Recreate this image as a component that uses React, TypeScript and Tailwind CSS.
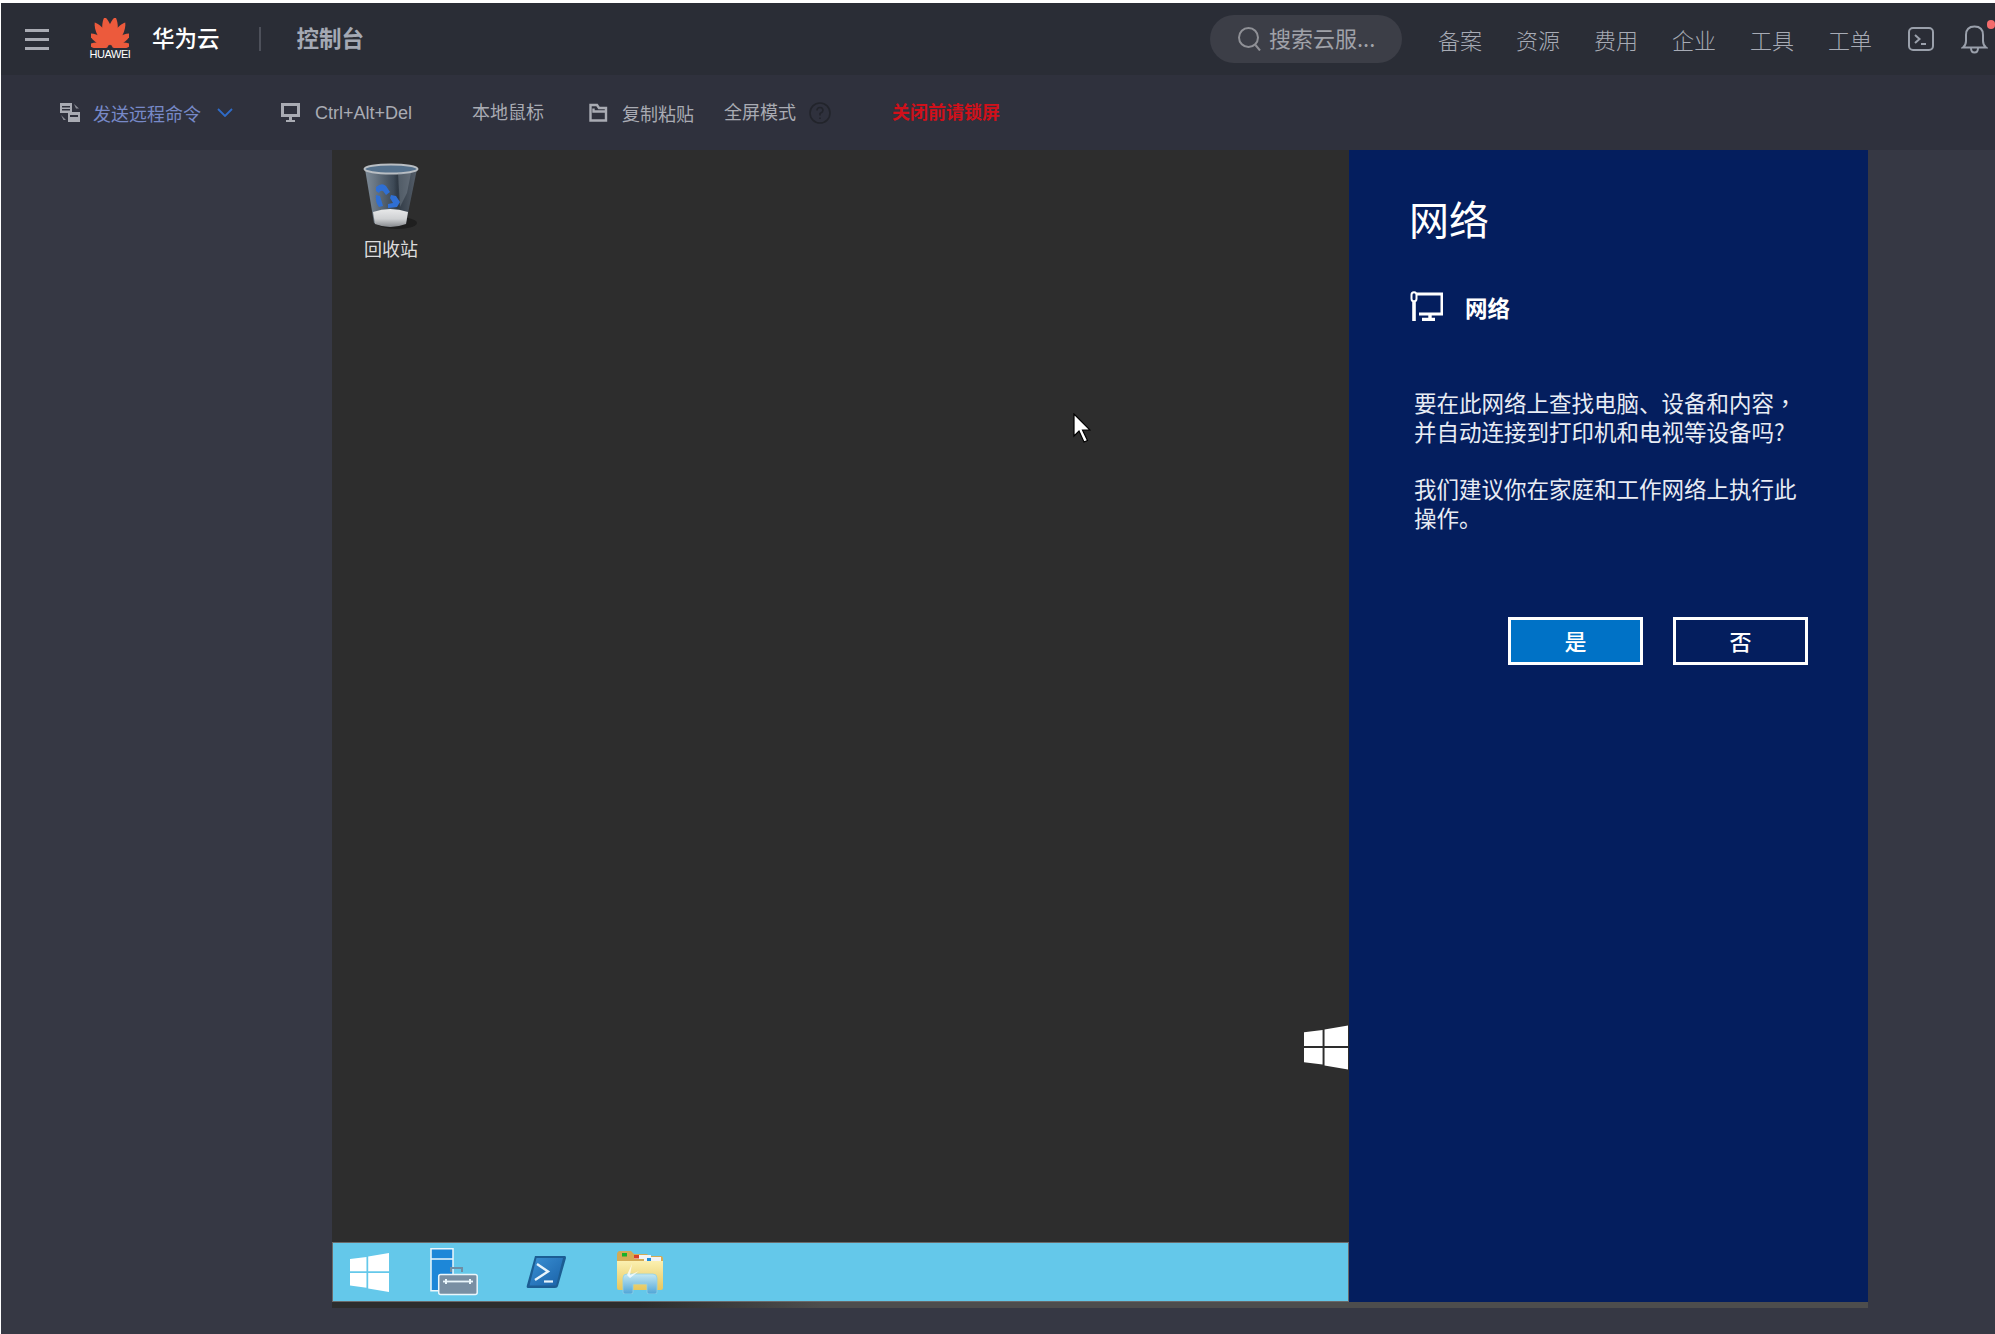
import React from "react";

const cjk = "font-['Noto_Sans_CJK_SC','Liberation_Sans',sans-serif]";

function Logo() {
  const petals: [number, number][] = [
    [-10, 29], [-32, 27], [-57, 23], [-84, 20],
    [10, 29], [32, 27], [57, 23], [84, 20],
  ];
  return (
    <svg className="shrink-0" width="38" height="30" viewBox="0 0 38 30">
      <defs>
        <linearGradient id="hw" gradientUnits="userSpaceOnUse" x1="19" y1="0" x2="19" y2="30">
          <stop offset="0" stopColor="#ec5a3c" />
          <stop offset="0.35" stopColor="#e22c16" />
          <stop offset="1" stopColor="#cc1a10" />
        </linearGradient>
      </defs>
      {petals.map(([a, l], i) => {
        const t = (a * Math.PI) / 180;
        const x = 19 + 1.8 * Math.sin(t);
        const y = 29 - 1.8 * Math.cos(t);
        return (
          <g key={i} transform={`translate(${x} ${y}) rotate(${a})`}>
            <path
              d={`M0 0 C${-l * 0.26} ${-l * 0.3} ${-l * 0.17} ${-l * 0.8} 0 ${-l} C${l * 0.17} ${-l * 0.8} ${l * 0.26} ${-l * 0.3} 0 0Z`}
              fill="url(#hw)"
            />
          </g>
        );
      })}
    </svg>
  );
}

function SendIcon() {
  return (
    <svg className="shrink-0" width="20" height="19" viewBox="0 0 20 19" fill="#a9abb3">
      <path d="M0 0h12v10H0zM2 3v1.5h8V3zM2 6v1.5h8V6z" fillRule="evenodd" />
      <path d="M8 9h12v10H8zM10 12v2h8v-2z" fillRule="evenodd" />
      <path d="M14 1l5 4.500h-3zM1 12l5 5H3.500z" opacity=".75" />
    </svg>
  );
}

function MonitorIcon() {
  return (
    <svg className="shrink-0" width="19" height="19" viewBox="0 0 19 19" fill="#a9abb3">
      <path d="M0 0h19v14H0zM3 3v8h13V3z" fillRule="evenodd" />
      <path d="M8 14h3v3h3v2H5v-2h3z" />
    </svg>
  );
}

function FolderIcon() {
  return (
    <svg className="shrink-0" width="19" height="19" viewBox="0 0 19 19" fill="none" stroke="#a9abb3" strokeWidth="2.400">
      <path d="M1.500 17.500V2h6.500l2 3h7v12.500z" />
      <path d="M4.500 5.500v3h13" />
    </svg>
  );
}

function WinLogo({ w, h, color = "#fff" }: { w: number; h: number; color?: string }) {
  return (
    <svg className="shrink-0" width={w} height={h} viewBox="0 0 45 45" fill={color}>
      <path d="M0 7 L19 4.500 V21 H0z" />
      <path d="M21 4 L45 0 V21 H21z" />
      <path d="M0 23 H19 V40 L0 37.500z" />
      <path d="M21 23 H45 V45 L21 41z" />
    </svg>
  );
}

function BinIcon() {
  return (
    <svg width="56" height="68" viewBox="0 0 56 68">
      <defs>
        <linearGradient id="glass" x1="0" x2="1" y1="0" y2="0">
          <stop offset="0" stopColor="#7e8b97" />
          <stop offset="0.18" stopColor="#6a7784" />
          <stop offset="0.55" stopColor="#3d4956" />
          <stop offset="0.62" stopColor="#2f3944" />
          <stop offset="1" stopColor="#565f6a" />
        </linearGradient>
        <linearGradient id="base" x1="0" x2="0" y1="0" y2="1">
          <stop offset="0" stopColor="#e8e9ea" />
          <stop offset="0.55" stopColor="#cfd1d3" />
          <stop offset="1" stopColor="#85888c" />
        </linearGradient>
      </defs>
      <ellipse cx="34" cy="60" rx="20" ry="6" fill="#161616" opacity=".6" />
      <path d="M2 6 L11 60 Q27 67 43 60 L54 6z" fill="url(#glass)" />
      <path d="M10 49 Q27 43 45 49 L43 61 Q27 67 12 61z" fill="url(#base)" />
      <ellipse cx="28" cy="6" rx="26.500" ry="4.500" fill="#55718c" stroke="#b9bec3" strokeWidth="2" />
      <path d="M35 10 L37 44 L44 30 L48 10z" fill="#8d97a3" opacity=".35" />
      <path d="M13 24 q6 -5 10 -1 l4 6 l-4 3 l-3 -4 q-3 -1 -4 2 l-3 -2z" fill="#2f6fd4" />
      <path d="M13 32 l4 1 l3 10 l-4 1 q-4 -5 -3 -12z" fill="#2f6fd4" />
      <path d="M28 32 l5 1 l4 6 l-3 5 l-9 1 l0 -4 l5 -1 l-3 -5z" fill="#2f6fd4" />
    </svg>
  );
}

function NetIcon() {
  return (
    <svg className="shrink-0" width="33" height="30" viewBox="0 0 33 30" fill="none" stroke="#fff" strokeWidth="3">
      <path d="M7 3 H32 V23 H9" />
      <path d="M20 23 V27 M12 28.500 H25" strokeWidth="3.400" />
      <path d="M4 9 V30" strokeWidth="3.600" />
      <rect x="1.500" y="1.200" width="5" height="9" rx="2.500" fill="#041e5e" strokeWidth="2" />
    </svg>
  );
}

function ServerIcon() {
  return (
    <svg width="48" height="48" viewBox="0 0 48 48">
      <path d="M1 0.800h22v42H1z" fill="#1d87d8" stroke="#eaf6fb" strokeWidth="1.500" />
      <path d="M1 11h22" stroke="#eaf6fb" strokeWidth="1.500" />
      <path d="M21 24v-4h11v4" fill="none" stroke="#6f8ea4" strokeWidth="2" />
      <rect x="8.700" y="27" width="38.500" height="20" rx="2" fill="#798fa3" stroke="#eaf6fb" strokeWidth="1.500" transform="translate(0 -0.500)" />
      <path d="M13 33.500h30" stroke="#eaf6fb" strokeWidth="1.800" />
      <path d="M16 31v5M40 31v5" stroke="#eaf6fb" strokeWidth="2" />
    </svg>
  );
}

function PsIcon() {
  return (
    <svg width="40" height="34" viewBox="0 0 40 34">
      <defs>
        <linearGradient id="ps" x1="0" y1="0" x2="1" y2="1">
          <stop offset="0" stopColor="#3a90d4" />
          <stop offset="1" stopColor="#1a62a8" />
        </linearGradient>
      </defs>
      <path d="M9 1 H39 Q40 1 40 3 L32 31 Q31.500 33 29 33 H2 Q0 33 1 30z" fill="#1c5d93" />
      <path d="M10.500 3 H37 L30 30.500 H3.500z" fill="url(#ps)" />
      <path d="M11 9 L22 16.500 L9 25" fill="none" stroke="#e8f4fb" strokeWidth="2.400" />
      <path d="M18 26.500 H27" stroke="#e8f4fb" strokeWidth="2.200" />
    </svg>
  );
}

function ExplorerIcon() {
  return (
    <svg width="48" height="44" viewBox="0 0 48 44">
      <defs>
        <linearGradient id="fo" x1="0" x2="0" y1="0" y2="1">
          <stop offset="0" stopColor="#fbf0b0" />
          <stop offset="1" stopColor="#e6c75f" />
        </linearGradient>
        <linearGradient id="arch" x1="0" x2="0" y1="0" y2="1">
          <stop offset="0" stopColor="#c4e8f2" />
          <stop offset="1" stopColor="#4fa5d8" />
        </linearGradient>
      </defs>
      <path d="M1 5 Q1 1 4 1 H15 L18 4 H31 L33 6 H45 Q47 6 47 9 V38 H1z" fill="#d4ab55" />
      <rect x="6" y="3" width="5" height="3.500" fill="#19b22a" />
      <rect x="18" y="5" width="17" height="4" fill="#f4f4f4" />
      <rect x="18" y="5" width="5" height="3.500" fill="#d8402a" />
      <rect x="28" y="7" width="17" height="4" fill="#f4f4f4" />
      <rect x="31" y="8" width="4" height="3" fill="#1f8edb" />
      <path d="M1 11 H47 V38 Q47 40 45 40 H3 Q1 40 1 38z" fill="url(#fo)" />
      <path d="M7 42 V28 Q7 24 11 24 H37 Q41 24 41 28 V42 Q41 44 39 44 H33 Q31 44 31 42 V34 H17 V42 Q17 44 15 44 H9 Q7 44 7 42z" fill="url(#arch)" stroke="#8fd0e8" strokeWidth=".8" />
      <path d="M11 25 L16 14 L14 25 L23 21 L14 28z" fill="#fff" opacity=".75" />
    </svg>
  );
}

function Cursor() {
  return (
    <svg width="18" height="30" viewBox="0 0 18 30">
      <path d="M1 1 V23 L6 18 L11 29 L14.500 27.500 L9.500 17 H17z" fill="#fff" stroke="#000" strokeWidth="1.200" />
    </svg>
  );
}

const navItems = ["备案", "资源", "费用", "企业", "工具", "工单"];

export default function App() {
  return (
    <div className={`flex h-[1334px] w-[1995px] flex-col overflow-hidden border-l border-white bg-white ${cjk}`}>
      <div className="h-[3px] shrink-0 bg-white" />

      <header className="flex h-[72px] shrink-0 items-center whitespace-nowrap bg-[#2a2d36] pl-6 pr-[7px] text-[#a7abb5]">
        <div className="flex w-6 shrink-0 flex-col gap-[6px]">
          <span className="h-[3px] bg-[#a9abb3]" />
          <span className="h-[3px] bg-[#a9abb3]" />
          <span className="h-[3px] bg-[#a9abb3]" />
        </div>
        <div className="ml-[42px] flex w-[38px] shrink-0 flex-col items-center">
          <Logo />
          <span className="mt-[1px] text-[11px] leading-[11px] tracking-[-0.45px] text-white font-['Liberation_Sans',sans-serif]">HUAWEI</span>
        </div>
        <span className="ml-[23px] shrink-0 pb-[4px] text-[22.500px] leading-none font-medium text-white">华为云</span>
        <span className="ml-[39px] h-6 w-[2px] shrink-0 bg-[#4d505a]" />
        <span className="ml-[36px] shrink-0 pb-[4px] text-[22.500px] leading-none font-bold text-[#a4a9b4]">控制台</span>

        <div className="ml-auto flex h-12 w-[192px] shrink-0 items-center rounded-[24px] bg-[#3c3e47] pl-7">
          <svg className="shrink-0" width="24" height="24" viewBox="0 0 24 24" fill="none" stroke="#8f9096" strokeWidth="2">
            <circle cx="10.500" cy="10.500" r="9.500" />
            <path d="M17.500 18 L22 23.500" />
          </svg>
          <span className="ml-[7px] pb-[5px] text-[22px] leading-none text-[#a0a2a9]">搜索云服...</span>
        </div>

        <nav className="ml-[36px] flex shrink-0 gap-[35px] text-[22px] leading-none font-light">
          {navItems.map((n) => (
            <span key={n} className="w-[43px]">{n}</span>
          ))}
        </nav>

        <svg className="ml-[37px] shrink-0" width="26" height="24" viewBox="0 0 26 24" fill="none" stroke="#9aa0ab" strokeWidth="2">
          <rect x="1" y="1" width="24" height="22" rx="4" />
          <path d="M7 8 L11.500 12 L7 16 M13 17 H18" />
        </svg>
        <div className="relative ml-[27px] shrink-0">
          <svg width="27" height="29" viewBox="0 0 27 29" fill="none" stroke="#9aa0ab" strokeWidth="2">
            <path d="M2 22.500 Q5 20 5 16 V10 Q5 1.500 13.500 1.500 Q22 1.500 22 10 V16 Q22 20 25 22.500z" />
            <path d="M10 23 Q10 27.500 13.500 27.500 Q17 27.500 17 23" />
          </svg>
          <span className="absolute -right-[7px] -top-[5px] h-[9px] w-[8px] rounded-full bg-[#f56c6c]" />
        </div>
      </header>

      <div className="flex h-[75px] shrink-0 items-center whitespace-nowrap bg-[#2f313d] pl-[59px] text-[18px] leading-none text-[#a9abb3]">
        <SendIcon />
        <span className="ml-[13px] text-[#7789c8]">发送远程命令</span>
        <svg className="ml-[16px] shrink-0" width="16" height="9" viewBox="0 0 16 9" fill="none" stroke="#2f6bc8" strokeWidth="1.800">
          <path d="M1 1 L8 8 L15 1" />
        </svg>
        <span className="ml-[48px]"><MonitorIcon /></span>
        <span className="ml-[15px] text-[18px] font-['Liberation_Sans',sans-serif]">Ctrl+Alt+Del</span>
        <span className="ml-[60px] -translate-y-[2px]">本地鼠标</span>
        <span className="ml-[45px]"><FolderIcon /></span>
        <span className="ml-[14px]">复制粘贴</span>
        <span className="ml-[30px] -translate-y-[2px]">全屏模式</span>
        <svg className="ml-[13px] shrink-0" width="22" height="22" viewBox="0 0 22 22" fill="none" stroke="#22242b" strokeWidth="1.600">
          <circle cx="11" cy="11" r="10" />
          <path d="M8 8.500 Q8 5.500 11 5.500 Q14 5.500 14 8.500 Q14 10 11 11.500 V13.500 M11 15.500 V17" />
        </svg>
        <span className="ml-[61px] -translate-y-[2px] font-bold text-[#d0101a]">关闭前请锁屏</span>
      </div>

      <main className="flex min-h-0 flex-1 flex-col bg-[#363844] pl-[331px] pr-[127px]">
        <div className="flex h-[1152px] shrink-0">
          <div className="flex w-[1017px] shrink-0 flex-col bg-[#2d2d2d]">
            <div className="relative flex-1">
              <div className="absolute left-[31px] top-[13px] flex w-[56px] flex-col items-center">
                <BinIcon />
                <span className="mt-[5px] text-[18px] leading-[24px] whitespace-nowrap text-[#dcdcdc]">回收站</span>
              </div>
              <div className="absolute left-[741px] top-[263px]"><Cursor /></div>
              <div className="absolute right-[1px] bottom-[172px]"><WinLogo w={44} h={45} /></div>
            </div>
            <div className="flex h-[60px] shrink-0 items-center border border-[#6a6a6a] bg-[#64c8ea] pl-[16px]">
              <WinLogo w={41} h={39} />
              <span className="ml-[40px]"><ServerIcon /></span>
              <span className="ml-[48px]"><PsIcon /></span>
              <span className="ml-[50px]"><ExplorerIcon /></span>
            </div>
          </div>

          <section className="flex flex-1 flex-col bg-[#041e5e] pl-[60px] text-white">
            <h1 className="mt-[38px] text-[40px] leading-[60px] font-normal">网络</h1>
            <div className="mt-[41px] ml-[1px] flex items-center">
              <NetIcon />
              <span className="ml-[22px] mt-[3px] text-[22.500px] leading-[30px] font-bold">网络</span>
            </div>
            <div className="mt-[66px] ml-[5px] w-[400px] text-[22.500px] leading-[29px] text-[#e8ecf4]">
              <p className="whitespace-nowrap">要在此网络上查找电脑、设备和内容<span className="font-['Noto_Sans_CJK_TC',sans-serif]">，</span></p>
              <p className="whitespace-nowrap">并自动连接到打印机和电视等设备吗?</p>
              <p className="mt-[28px] whitespace-nowrap">我们建议你在家庭和工作网络上执行此</p>
              <p className="whitespace-nowrap">操作。</p>
            </div>
            <div className="mt-[85px] ml-[99px] flex gap-[30px]">
              <button className="flex h-12 w-[135px] items-center justify-center border-[3px] border-white bg-[#0072c6] pb-[2px] text-[22px] font-medium text-white">是</button>
              <button className="flex h-12 w-[135px] items-center justify-center border-[3px] border-white pb-[2px] text-[22px] font-medium text-white">否</button>
            </div>
          </section>
        </div>
        <div className="h-[6px] shrink-0 bg-[linear-gradient(90deg,#2d2d2d_0%,#2d2d2d_20%,#4d4d4d_32%,#4d4d4d_100%)]" />
      </main>
    </div>
  );
}
